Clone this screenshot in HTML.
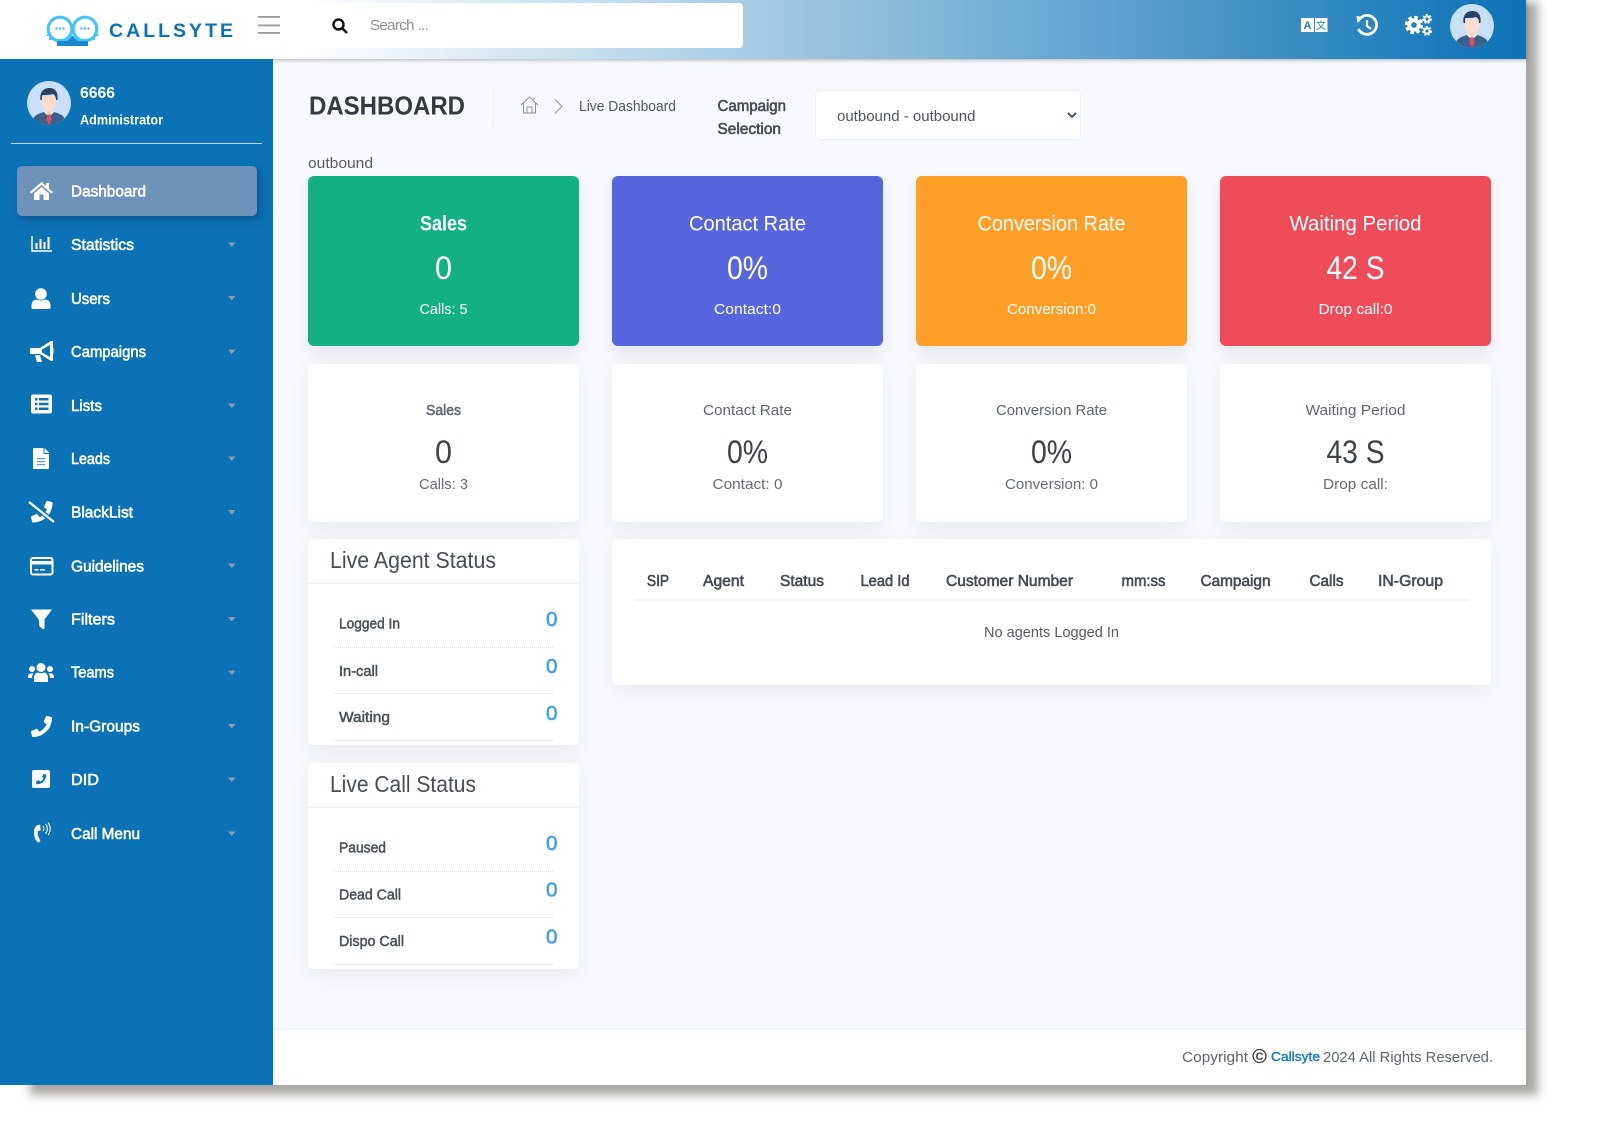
<!DOCTYPE html>
<html lang="en"><head><meta charset="utf-8"><title>Callsyte Dashboard</title>
<style>
html,body{margin:0;padding:0;background:#fff;width:1600px;height:1123px;overflow:hidden;font-family:"Liberation Sans",sans-serif}
#shadow{position:absolute;left:30px;top:2px;width:1508px;height:1093px;background:#a8a6a2;filter:blur(5px)}
#page{position:absolute;left:0;top:0;width:1526px;height:1085px;background:#f8f9fc}
.b{position:absolute;box-sizing:border-box}
.card{background:#fff;border-radius:6px;box-shadow:0 8px 20px rgba(90,100,130,.09)}
svg#o{position:absolute;left:0;top:0}
text{font-family:"Liberation Sans",sans-serif;white-space:pre}
.m{text-anchor:middle}
.side{font-size:15.500px;fill:#fff;stroke:#fff;stroke-width:.55px}
.title{font-size:21.500px;fill:#fff}
.val{font-size:32px;fill:#fff}
.sub{font-size:15px;fill:#fff}
.t2{font-size:15px;fill:#5f6670}
.v2{font-size:32px;fill:#3e4249}
.s2{font-size:15px;fill:#666c75}
.h{font-size:23px;fill:#474d57}
.row{font-size:15px;fill:#4a5058;stroke:#4a5058;stroke-width:.5px}
.z{font-size:20.500px;fill:#3d9ff0;stroke:#3d9ff0;stroke-width:.55px}
.th{font-size:15.500px;fill:#454c56;stroke:#454c56;stroke-width:.6px}
.care{fill:#8d9db3}
select{position:absolute;left:815px;top:90px;width:266px;height:50px;background:#fff;border:1px solid #edf0f5;border-radius:5px;padding:2px 0 0 17px;font:15px "Liberation Sans",sans-serif;color:#4f5560;outline:0;box-sizing:border-box}
input{position:absolute;left:370px;top:13px;width:360px;height:24px;border:0;background:transparent;font:15px "Liberation Sans",sans-serif;outline:0;padding:0;letter-spacing:-.6px}
input::placeholder{color:#8a8f96;opacity:1}
</style></head><body>
<div id="shadow"></div>
<div id="page">
<div class="b" style="left:0;top:0;width:1526px;height:59px;background:linear-gradient(to right,#fff 20%,#0b72b5 100%);box-shadow:0 1px 4px rgba(0,0,0,.3)"></div>
<div class="b" style="left:0;top:59px;width:273px;height:1026px;background:#0b72b5"></div>
<div class="b" style="left:17px;top:166px;width:240px;height:50px;background:#6f92bb;border-radius:5px;box-shadow:3px 4px 8px rgba(0,30,70,.3)"></div>
<div class="b" style="left:11px;top:143px;width:251px;height:1px;background:#b8d5ea"></div>
<div class="b" style="left:307px;top:3px;width:436px;height:45px;background:#fff;border-radius:4px"></div>
<input type="text" placeholder="Search ...">
<div class="b" style="left:493px;top:86px;width:1px;height:40px;background:#eceef2"></div>
<div class="b" style="left:273px;top:1028px;width:1253px;height:57px;background:#fff;border-top:2px solid #f1f3f6"></div>

<div class="b" style="left:308px;top:176px;width:271px;height:170px;background:#13b080;border-radius:6px;box-shadow:0 8px 18px rgba(90,100,130,.13)"></div>
<div class="b" style="left:612px;top:176px;width:271px;height:170px;background:#5766dd;border-radius:6px;box-shadow:0 8px 18px rgba(90,100,130,.13)"></div>
<div class="b" style="left:916px;top:176px;width:271px;height:170px;background:#ff9f27;border-radius:6px;box-shadow:0 8px 18px rgba(90,100,130,.13)"></div>
<div class="b" style="left:1220px;top:176px;width:271px;height:170px;background:#ee4c5a;border-radius:6px;box-shadow:0 8px 18px rgba(90,100,130,.13)"></div>
<div class="b card" style="left:308px;top:364px;width:271px;height:158px"></div>
<div class="b card" style="left:612px;top:364px;width:271px;height:158px"></div>
<div class="b card" style="left:916px;top:364px;width:271px;height:158px"></div>
<div class="b card" style="left:1220px;top:364px;width:271px;height:158px"></div>
<div class="b card" style="left:308px;top:539px;width:271px;height:206px"><div class="b" style="left:0;top:44px;width:271px;height:1px;background:#eceef2"></div>
<div class="b" style="left:26px;top:108px;width:219px;border-top:1px dotted #d9dce1"></div><div class="b" style="left:26px;top:154px;width:219px;border-top:1px dotted #d9dce1"></div><div class="b" style="left:26px;top:201px;width:219px;border-top:1px dotted #d9dce1"></div></div>
<div class="b card" style="left:308px;top:763px;width:271px;height:206px"><div class="b" style="left:0;top:44px;width:271px;height:1px;background:#eceef2"></div>
<div class="b" style="left:26px;top:108px;width:219px;border-top:1px dotted #d9dce1"></div><div class="b" style="left:26px;top:154px;width:219px;border-top:1px dotted #d9dce1"></div><div class="b" style="left:26px;top:201px;width:219px;border-top:1px dotted #d9dce1"></div></div>
<div class="b card" style="left:612px;top:539px;width:879px;height:146px"><div class="b" style="left:22px;top:60px;width:835px;height:2px;background:#f1f3f6"></div></div>
<select><option>outbound - outbound</option></select>
</div>

<svg id="o" width="1600" height="1123" viewBox="0 0 1600 1123" xmlns="http://www.w3.org/2000/svg">
<defs>
<symbol id="av" viewBox="0 0 44 44">
<clipPath id="cc"><circle cx="22" cy="22" r="22"/></clipPath>
<g clip-path="url(#cc)"><rect width="44" height="44" fill="#c9e0fb"/>
<path d="M5 44c0-9 5-11 12-13l5 2 5-2c7 2 12 4 12 13z" fill="#3d5f8c"/>
<path d="M17 31l5 5 5-5-2-2h-6z" fill="#fff"/>
<path d="M20.500 33h3l1 6-2.500 5-2.500-5z" fill="#e2505c"/>
<path d="M18.500 24h7v7l-3.500 3-3.500-3z" fill="#f7cdbb"/>
<path d="M14.500 15h15v6c0 6-4 9-7.500 9s-7.500-3-7.500-9z" fill="#fbdccd"/>
<path d="M13.500 19c-1-8 3-12 9-12 5 0 9 3 8 12l-1.500 0c0-3-1-5-3-6-3 1-7 1-10.500 1-.5 1-.5 3-.5 5z" fill="#2b4263"/></g>
</symbol>
<path id="ph" d="M493.400 24.600l-104-24c-11.300-2.600-22.900 3.300-27.500 13.900l-48 112c-4.200 9.800-1.400 21.300 6.900 28l60.600 49.600c-36 76.700-98.900 140.500-177.200 177.200l-49.600-60.600c-6.800-8.300-18.200-11.100-28-6.900l-112 48C3.900 366.500-2 378.100.6 389.400l24 104C27.100 504.200 36.700 512 48 512c256.100 0 464-207.500 464-464 0-11.200-7.700-20.900-18.600-23.400z"/>
</defs>

<!-- logo -->
<g fill="#fff" stroke="#47c4f8" stroke-width="3.200"><circle cx="60" cy="29" r="11.800"/><circle cx="85" cy="29" r="11.800"/></g>
<g fill="#4ab6ea"><circle cx="56.500" cy="28.500" r="1.200"/><circle cx="60" cy="28.500" r="1.200"/><circle cx="63.500" cy="28.500" r="1.200"/><circle cx="81.500" cy="28.500" r="1.200"/><circle cx="85" cy="28.500" r="1.200"/><circle cx="88.500" cy="28.500" r="1.200"/></g>
<path d="M46 36l4-5 2 5zM99 36l-4-5-2 5z" fill="#47c4f8"/>
<path d="M49 35c7 6 17 5 23 0 6 5 16 6 23 0v5H49z" fill="#47c4f8"/>
<path d="M57 41h31v5H57z" fill="#1a86cd"/>
<path d="M66 41c3-1 5-3 6.500-5 1.500 2 3.500 4 6.500 5z" fill="#1a86cd"/>
<text x="109" y="37" font-size="19.500" font-weight="bold" fill="#0b72b5" textLength="124" lengthAdjust="spacing">CALLSYTE</text>
<g fill="#9a9a9a"><rect x="258" y="16" width="22" height="1.800"/><rect x="258" y="24.500" width="22" height="1.800"/><rect x="258" y="32" width="22" height="1.800"/></g>
<circle cx="338.500" cy="24.500" r="5" fill="none" stroke="#111" stroke-width="2.400"/><path d="M342 28l5 5" stroke="#111" stroke-width="2.600"/>

<!-- top right -->
<rect x="1301" y="18" width="13" height="14" fill="#fff"/><rect x="1315" y="18" width="12.500" height="14" fill="#fff"/>
<text x="1303.500" y="29" font-size="11" font-weight="bold" fill="#1f7db8">A</text>
<text x="1316" y="29" font-size="10" fill="#1f7db8" style='font-family:"Noto Sans CJK SC",sans-serif'>文</text>
<path d="M1360 18.500A9.500 9.500 0 1 1 1358.500 29" fill="none" stroke="#fff" stroke-width="2.800"/>
<path d="M1356.500 16l7.500 1-6.500 6z" fill="#fff"/><path d="M1367 20v6l4 3" fill="none" stroke="#fff" stroke-width="2.200"/>
<g fill="none" stroke="#fff"><circle cx="1414" cy="25" r="4.800" stroke-width="4"/><circle cx="1414" cy="25" r="7.500" stroke-width="3.400" stroke-dasharray="3.400 2.500"/>
<circle cx="1427" cy="19" r="2.600" stroke-width="2"/><circle cx="1427" cy="19" r="4" stroke-width="1.800" stroke-dasharray="2 1.500"/>
<circle cx="1427" cy="31" r="2.600" stroke-width="2"/><circle cx="1427" cy="31" r="4" stroke-width="1.800" stroke-dasharray="2 1.500"/></g>
<use href="#av" x="1450" y="4" width="44" height="44"/>

<!-- sidebar -->
<use href="#av" x="27" y="81" width="44" height="44"/>
<text x="80" y="98" font-size="15.500" font-weight="bold" fill="#fff" textLength="35" lengthAdjust="spacingAndGlyphs">6666</text>
<text x="80" y="124.500" font-size="14" font-weight="bold" fill="#fff" textLength="83" lengthAdjust="spacingAndGlyphs">Administrator</text>

<path d="M30 192L41.500 182 46 186V183H49V189L53 192 51.500 193.500 41.500 185 31.500 193.500Z" fill="#fff"/>
<path d="M34 193.500L41.500 187 49 193.500V200H43.500V194.500H39.500V200H34Z" fill="#fff"/>
<text class="side" x="71" y="196.500" textLength="75" lengthAdjust="spacingAndGlyphs">Dashboard</text>

<path d="M32 236V251H52" fill="none" stroke="#fff" stroke-width="1.500"/>
<path d="M35.500 243h2v6h-2zM39.500 239h2v10h-2zM43.500 242h2v7h-2zM47.500 237h2v12h-2z" fill="#fff"/>
<text class="side" x="71" y="250" textLength="63" lengthAdjust="spacingAndGlyphs">Statistics</text>

<circle cx="41" cy="294" r="5.800" fill="#fff"/><path d="M32 309q-.5 0-.5-1.500v-1.500q0-6 5-6.500 4.500 2 9 0 5 .5 5 6.500v1.500q0 1.500-.5 1.500z" fill="#fff"/>
<text class="side" x="71" y="304" textLength="39" lengthAdjust="spacingAndGlyphs">Users</text>

<path d="M30 349q0-1 1-1h9l11-7h2v20h-2l-11-7h-9q-1 0-1-1z" fill="#fff"/><path d="M35 355h5l2 7h-5z" fill="#fff"/><path d="M42 349.500l8-4.500v12l-8-4.500z" fill="#0b72b5"/><rect x="52" y="348" width="1.500" height="6" fill="#fff"/>
<text class="side" x="71" y="357" textLength="75" lengthAdjust="spacingAndGlyphs">Campaigns</text>

<rect x="31" y="394.500" width="21" height="19" rx="2" fill="#fff"/><path d="M35 398h2.500v2.500H35zM39 398h9.500v2.500H39zM35 402.800h2.500v2.500H35zM39 402.800h9.500v2.500H39zM35 407.500h2.500v2.500H35zM39 407.500h9.500v2.500H39z" fill="#0b72b5"/>
<text class="side" x="71" y="411" textLength="31" lengthAdjust="spacingAndGlyphs">Lists</text>

<path d="M33 449q0-1 1-1h9.500v5q0 1 1 1H49v14q0 1-1 1H34q-1 0-1-1zM44.500 448l4.500 4.500V453h-4.500z" fill="#fff"/><path d="M37 458h8v1.200h-8zM37 461h8v1.200h-8zM37 464h8v1.200h-8z" fill="#5b9dcb"/>
<text class="side" x="71" y="464" textLength="39" lengthAdjust="spacingAndGlyphs">Leads</text>

<use href="#ph" transform="translate(31 501) scale(.042)" fill="#fff"/>
<path d="M29 502l25 20" stroke="#0b72b5" stroke-width="5"/><path d="M29 502l25 20" stroke="#fff" stroke-width="2.200"/>
<text class="side" x="71" y="517.500" textLength="62" lengthAdjust="spacingAndGlyphs">BlackList</text>

<rect x="31" y="558" width="21.500" height="16.500" rx="2" fill="none" stroke="#fff" stroke-width="2"/><rect x="31" y="561" width="21.500" height="3.500" fill="#fff"/><path d="M34.500 569h4v1.500h-4zM40 569h5v1.500h-5z" fill="#fff"/>
<text class="side" x="71" y="571.500" textLength="73" lengthAdjust="spacingAndGlyphs">Guidelines</text>

<path d="M31 609.500H52L44.500 619.500V628.500Q44 629.500 43 629L39.500 626.500 38.700 619.500Z" fill="#fff"/>
<text class="side" x="71" y="624.500" textLength="44" lengthAdjust="spacingAndGlyphs">Filters</text>

<circle cx="41" cy="667.500" r="4.500" fill="#fff"/><circle cx="32" cy="669" r="3" fill="#fff"/><circle cx="50" cy="669" r="3" fill="#fff"/>
<path d="M34 682v-4q0-5 4-5.500 3 1.500 6 0 4 .5 4 5.500v4zM28 678v-1q0-3 2.500-3.500h3q-1.500 1.500-1.500 4.500zM54 678v-1q0-3-2.500-3.500h-3q1.500 1.500 1.500 4.500z" fill="#fff"/>
<text class="side" x="71" y="677.500" textLength="43" lengthAdjust="spacingAndGlyphs">Teams</text>

<use href="#ph" transform="translate(31 716) scale(.041)" fill="#fff"/>
<text class="side" x="71" y="731.500" textLength="69" lengthAdjust="spacingAndGlyphs">In-Groups</text>

<rect x="32" y="770" width="18" height="18" rx="2" fill="#fff"/><use href="#ph" transform="translate(36 774) scale(.02)" fill="#0b72b5"/>
<text class="side" x="71" y="785" textLength="28" lengthAdjust="spacingAndGlyphs">DID</text>

<path d="M38 825q-4 1-4 7.500t4 10l2.500-1.500-2.500-5q-.7-3 .2-5l2.500-.7-.5-5.500z" fill="#fff"/><path d="M43 826a4 4 0 0 1 0 5M45.500 824a7 7 0 0 1 0 9.500M48 822.500a10 10 0 0 1 0 12.500" fill="none" stroke="#fff" stroke-width="1.100"/>
<text class="side" x="71" y="839" textLength="69" lengthAdjust="spacingAndGlyphs">Call Menu</text>

<g class="care"><path d="M228 242.500h7.500l-3.700 4.500zM228 296h7.500l-3.700 4.500zM228 349.500h7.500l-3.700 4.500zM228 403.500h7.500l-3.700 4.500zM228 456.500h7.500l-3.700 4.500zM228 510h7.500l-3.700 4.500zM228 563.500h7.500l-3.700 4.500zM228 617h7.500l-3.700 4.500zM228 670.500h7.500l-3.700 4.500zM228 724h7.500l-3.700 4.500zM228 777.500h7.500l-3.700 4.500zM228 831.500h7.500l-3.700 4.500z"/></g>

<!-- page head -->
<text x="309" y="114.500" font-size="26" font-weight="bold" fill="#343a44" textLength="156" lengthAdjust="spacingAndGlyphs">DASHBOARD</text>
<path d="M521 105L529.500 97 538 105M523.500 103V113H535.500V103M527 113V107H532V113M534 97.500V100" fill="none" stroke="#8d939b" stroke-width="1"/>
<path d="M555 99.500L562 106.500 555 113.500" fill="none" stroke="#8d939b" stroke-width="1"/>
<text x="579" y="111" font-size="14.500" fill="#4f5660" textLength="97" lengthAdjust="spacingAndGlyphs">Live Dashboard</text>
<text x="717.500" y="111" font-size="15.500" fill="#454c56" stroke="#454c56" stroke-width=".6" textLength="68.500" lengthAdjust="spacingAndGlyphs">Campaign</text>
<text x="717.500" y="134" font-size="15.500" fill="#454c56" stroke="#454c56" stroke-width=".6" textLength="63.500" lengthAdjust="spacingAndGlyphs">Selection</text>
<text x="308" y="168" font-size="15" fill="#555b63" textLength="65" lengthAdjust="spacingAndGlyphs">outbound</text>

<!-- top cards -->
<text class="title m" x="443.500" y="230.500" font-weight="bold" textLength="47" lengthAdjust="spacingAndGlyphs">Sales</text>
<text class="val m" x="443.500" y="279" textLength="17" lengthAdjust="spacingAndGlyphs">0</text>
<text class="sub m" x="443.500" y="314" textLength="48" lengthAdjust="spacingAndGlyphs">Calls: 5</text>
<text class="title m" x="747.500" y="230.500" textLength="117" lengthAdjust="spacingAndGlyphs">Contact Rate</text>
<text class="val m" x="747.500" y="279" textLength="41" lengthAdjust="spacingAndGlyphs">0%</text>
<text class="sub m" x="747.500" y="314" textLength="67" lengthAdjust="spacingAndGlyphs">Contact:0</text>
<text class="title m" x="1051.500" y="230.500" textLength="148" lengthAdjust="spacingAndGlyphs">Conversion Rate</text>
<text class="val m" x="1051.500" y="279" textLength="41" lengthAdjust="spacingAndGlyphs">0%</text>
<text class="sub m" x="1051.500" y="314" textLength="89" lengthAdjust="spacingAndGlyphs">Conversion:0</text>
<text class="title m" x="1355.500" y="230.500" textLength="132" lengthAdjust="spacingAndGlyphs">Waiting Period</text>
<text class="val m" x="1355.500" y="279" textLength="58" lengthAdjust="spacingAndGlyphs">42 S</text>
<text class="sub m" x="1355.500" y="314" textLength="74" lengthAdjust="spacingAndGlyphs">Drop call:0</text>

<!-- second cards -->
<text class="t2 m" x="443.500" y="415" stroke="#5f6670" stroke-width=".55" textLength="35" lengthAdjust="spacingAndGlyphs">Sales</text>
<text class="v2 m" x="443.500" y="463" textLength="17" lengthAdjust="spacingAndGlyphs">0</text>
<text class="s2 m" x="443.500" y="489" textLength="49" lengthAdjust="spacingAndGlyphs">Calls: 3</text>
<text class="t2 m" x="747.500" y="415" textLength="89" lengthAdjust="spacingAndGlyphs">Contact Rate</text>
<text class="v2 m" x="747.500" y="463" textLength="41" lengthAdjust="spacingAndGlyphs">0%</text>
<text class="s2 m" x="747.500" y="489" textLength="70" lengthAdjust="spacingAndGlyphs">Contact: 0</text>
<text class="t2 m" x="1051.500" y="415" textLength="111" lengthAdjust="spacingAndGlyphs">Conversion Rate</text>
<text class="v2 m" x="1051.500" y="463" textLength="41" lengthAdjust="spacingAndGlyphs">0%</text>
<text class="s2 m" x="1051.500" y="489" textLength="93" lengthAdjust="spacingAndGlyphs">Conversion: 0</text>
<text class="t2 m" x="1355.500" y="415" textLength="100" lengthAdjust="spacingAndGlyphs">Waiting Period</text>
<text class="v2 m" x="1355.500" y="463" textLength="58" lengthAdjust="spacingAndGlyphs">43 S</text>
<text class="s2 m" x="1355.500" y="489" textLength="65" lengthAdjust="spacingAndGlyphs">Drop call:</text>

<!-- live agent -->
<text class="h" x="330" y="568" textLength="166" lengthAdjust="spacingAndGlyphs">Live Agent Status</text>
<text class="row" x="339" y="628.500" textLength="61" lengthAdjust="spacingAndGlyphs">Logged In</text>
<text class="row" x="339" y="676" textLength="39" lengthAdjust="spacingAndGlyphs">In-call</text>
<text class="row" x="339" y="722" textLength="51" lengthAdjust="spacingAndGlyphs">Waiting</text>
<text class="z" x="546" y="626" textLength="11.500" lengthAdjust="spacingAndGlyphs">0</text>
<text class="z" x="546" y="673" textLength="11.500" lengthAdjust="spacingAndGlyphs">0</text>
<text class="z" x="546" y="720" textLength="11.500" lengthAdjust="spacingAndGlyphs">0</text>

<!-- live call -->
<text class="h" x="330" y="792" textLength="146" lengthAdjust="spacingAndGlyphs">Live Call Status</text>
<text class="row" x="339" y="852.500" textLength="47" lengthAdjust="spacingAndGlyphs">Paused</text>
<text class="row" x="339" y="899.500" textLength="62" lengthAdjust="spacingAndGlyphs">Dead Call</text>
<text class="row" x="339" y="946" textLength="65" lengthAdjust="spacingAndGlyphs">Dispo Call</text>
<text class="z" x="546" y="850" textLength="11.500" lengthAdjust="spacingAndGlyphs">0</text>
<text class="z" x="546" y="896.500" textLength="11.500" lengthAdjust="spacingAndGlyphs">0</text>
<text class="z" x="546" y="943.500" textLength="11.500" lengthAdjust="spacingAndGlyphs">0</text>

<!-- table -->
<text class="th" x="647" y="586" textLength="22" lengthAdjust="spacingAndGlyphs">SIP</text>
<text class="th" x="703" y="586" textLength="41" lengthAdjust="spacingAndGlyphs">Agent</text>
<text class="th" x="780" y="586" textLength="44" lengthAdjust="spacingAndGlyphs">Status</text>
<text class="th" x="860.500" y="586" textLength="49" lengthAdjust="spacingAndGlyphs">Lead Id</text>
<text class="th" x="946" y="586" textLength="127" lengthAdjust="spacingAndGlyphs">Customer Number</text>
<text class="th" x="1121.500" y="586" textLength="44" lengthAdjust="spacingAndGlyphs">mm:ss</text>
<text class="th" x="1200.500" y="586" textLength="70" lengthAdjust="spacingAndGlyphs">Campaign</text>
<text class="th" x="1309.500" y="586" textLength="34" lengthAdjust="spacingAndGlyphs">Calls</text>
<text class="th" x="1378" y="586" textLength="65" lengthAdjust="spacingAndGlyphs">IN-Group</text>
<text x="984" y="637" font-size="15" fill="#555b63" textLength="135" lengthAdjust="spacingAndGlyphs">No agents Logged In</text>

<!-- footer -->
<text x="1182" y="1062" font-size="15" fill="#5f656d" textLength="66" lengthAdjust="spacingAndGlyphs">Copyright</text>
<circle cx="1259.500" cy="1056" r="6.500" fill="none" stroke="#3e444c" stroke-width="1.300"/>
<text x="1255.500" y="1060" font-size="11" font-weight="bold" fill="#3e444c">C</text>
<text x="1271" y="1061" font-size="13" fill="#1a7fc0" stroke="#1a7fc0" stroke-width=".45" textLength="49" lengthAdjust="spacingAndGlyphs">Callsyte</text>
<text x="1323" y="1062" font-size="15" fill="#5f656d" textLength="170" lengthAdjust="spacingAndGlyphs">2024 All Rights Reserved.</text>
</svg>
</body></html>
